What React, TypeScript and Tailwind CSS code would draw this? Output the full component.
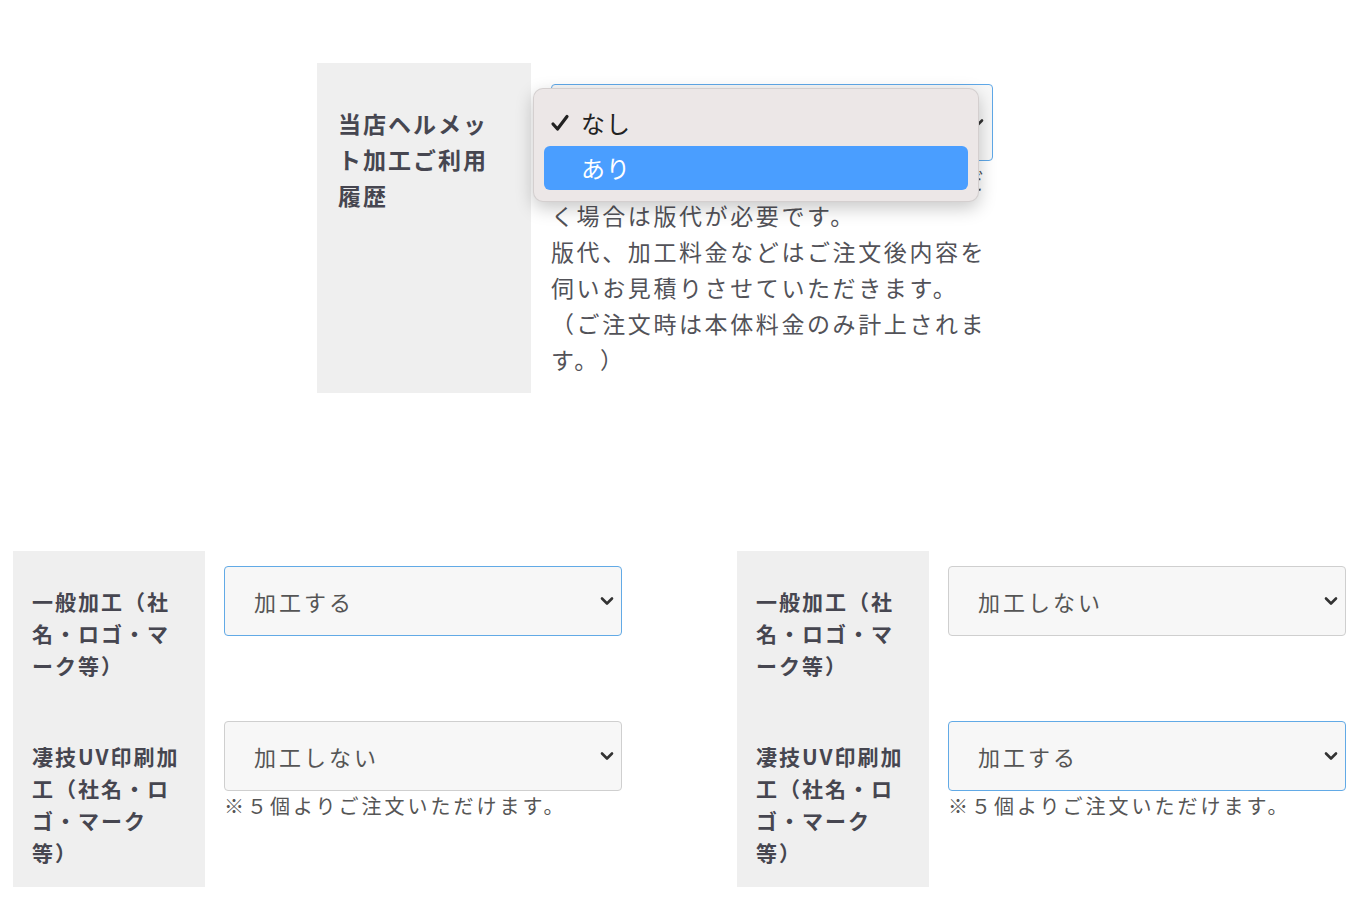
import { useState } from "react";

type Option = { value: string; label: string };

const PROCESS_OPTIONS: Option[] = [
  { value: "none", label: "加工しない" },
  { value: "yes", label: "加工する" },
];

function Chevron({ className = "" }: { className?: string }) {
  return (
    <svg
      className={`pointer-events-none absolute top-1/2 -translate-y-1/2 ${className}`}
      width="14"
      height="10"
      viewBox="0 0 14 10"
      fill="none"
    >
      <path
        d="M2 2.5l5 5 5-5"
        stroke="#333"
        strokeWidth="2.6"
        strokeLinecap="round"
        strokeLinejoin="round"
      />
    </svg>
  );
}

function ProcessSelect({
  initial,
  focused,
}: {
  initial: string;
  focused?: boolean;
}) {
  const [value, setValue] = useState(initial);
  return (
    <div className="relative w-[398px]">
      <select
        value={value}
        onChange={(e) => setValue(e.target.value)}
        className={`block h-[70px] w-full appearance-none rounded-[4px] border bg-[#f7f7f7] pl-[29px] text-[22px] tracking-[3px] text-[#555] outline-none ${
          focused ? "border-[#62aae6]" : "border-[#cfcfcf]"
        }`}
      >
        {PROCESS_OPTIONS.map((o) => (
          <option key={o.value} value={o.value}>
            {o.label}
          </option>
        ))}
      </select>
      <Chevron className="right-[8px]" />
    </div>
  );
}

function ProcessTable({
  general,
  uv,
}: {
  general: string;
  uv: string;
}) {
  return (
    <div className="flex w-[629px] flex-col">
      <div className="flex">
        <div className="w-[192px] shrink-0 bg-[#efefef] px-[19px] pt-[34px] pb-[25px] text-[21px] font-bold leading-[32px] tracking-[2px] text-[#464650]">
          一般加工（社名・ロゴ・マーク等）
        </div>
        <div className="pl-[19px] pt-[15px]">
          <ProcessSelect initial={general} focused={general === "yes"} />
        </div>
      </div>
      <div className="flex">
        <div className="w-[192px] shrink-0 bg-[#efefef] px-[19px] pt-[34px] pb-[19px] text-[21px] font-bold leading-[32px] tracking-[2px] text-[#464650]">
          凄技UV印刷加工（社名・ロゴ・マーク等）
        </div>
        <div className="pl-[19px] pt-[15px]">
          <ProcessSelect initial={uv} focused={uv === "yes"} />
          <p className="text-[20px] leading-[30px] tracking-[3px] text-[#555]">
            ※５個よりご注文いただけます。
          </p>
        </div>
      </div>
    </div>
  );
}

function HistoryRow() {
  return (
    <div className="ml-[317px] flex w-[696px]">
      <div className="w-[214px] shrink-0 bg-[#efefef] px-[21px] pt-[42px] text-[23px] font-bold leading-[36px] tracking-[2px] text-[#464650]">
        当店ヘルメット加工ご利用履歴
      </div>
      <div className="relative pl-[20px] pt-[21px] pb-[16px]">
        <div className="relative w-[442px]">
          <div className="flex h-[77px] items-center rounded-[4px] border border-[#5fa8e8] bg-[#f7f7f7] pl-[29px] text-[24px] text-[#555]">
            なし
          </div>
          <Chevron className="right-[9px]" />

          {/* open option list */}
          <div className="absolute left-[-18px] top-[4px] z-10 w-[446px] rounded-[10px] border border-black/10 bg-[#ece7e7] px-[10px] pt-[12px] pb-[11px] shadow-[0_6px_18px_rgba(0,0,0,0.22)]">
            <div className="flex h-[44px] items-center text-[24px] tracking-[1px] text-[#222]">
              <svg className="ml-[6px]" width="20" height="18" viewBox="0 0 20 18" fill="none">
                <path
                  d="M3 10l4.5 5L17 2.5"
                  stroke="#222"
                  strokeWidth="3.2"
                  strokeLinecap="round"
                  strokeLinejoin="round"
                />
              </svg>
              <span className="ml-[11px]">なし</span>
            </div>
            <div className="mt-[1px] flex h-[44px] items-center rounded-[6px] bg-[#4a9eff] pl-[37px] text-[24px] tracking-[1px] text-white">
              あり
            </div>
          </div>
        </div>
        <p className="w-[442px] text-[23px] leading-[36px] tracking-[2.6px] text-[#525258]">
          初めて当店でヘルメット加工をいただく場合は版代が必要です。
          <br />
          版代、加工料金などはご注文後内容を伺いお見積りさせていただきます。
          <br />
          （ご注文時は本体料金のみ計上されます。）
        </p>
      </div>
    </div>
  );
}

export default function App() {
  return (
    <div className="min-h-screen bg-white pt-[63px] font-['Noto_Sans_CJK_JP',sans-serif] [text-spacing-trim:space-all]">
      <HistoryRow />
      <div className="mt-[158px] flex gap-[95px] pl-[13px]">
        <ProcessTable general="yes" uv="none" />
        <ProcessTable general="none" uv="yes" />
      </div>
    </div>
  );
}
